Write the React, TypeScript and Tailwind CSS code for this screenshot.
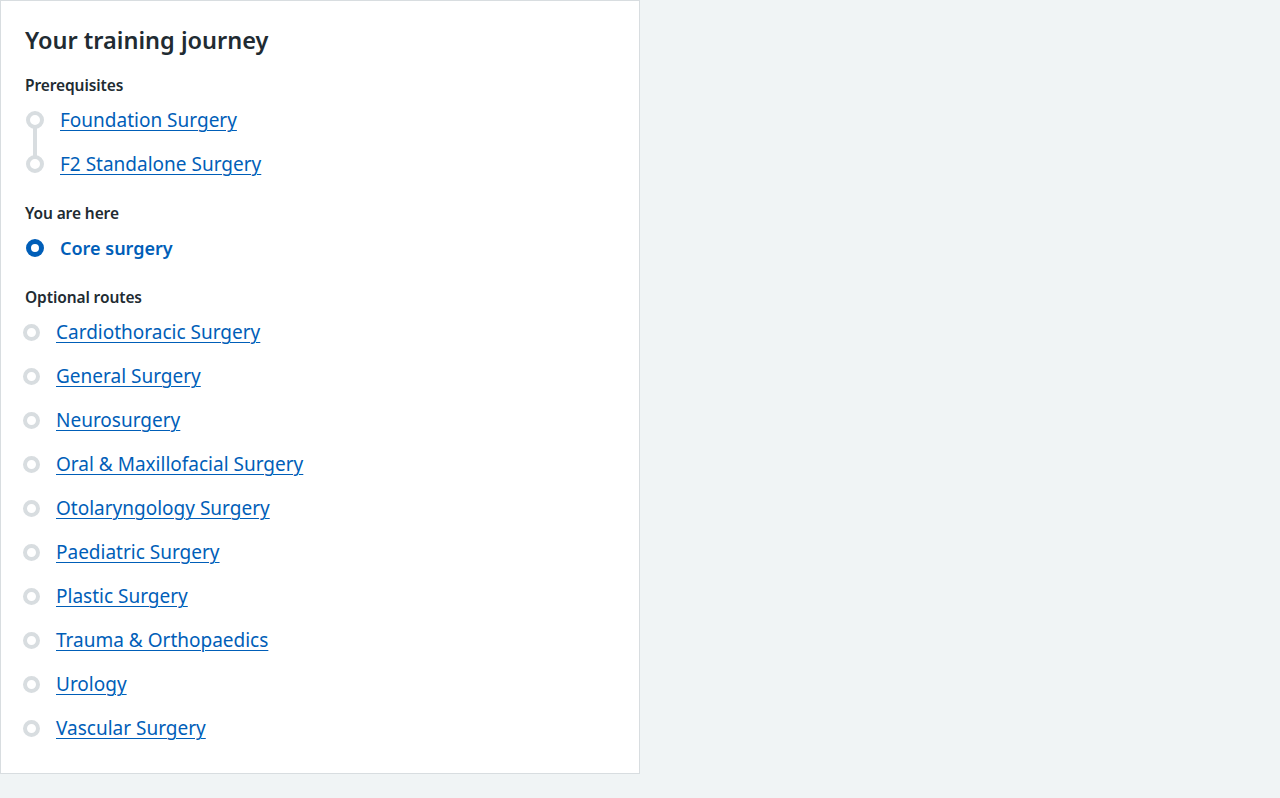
import React from "react";

const prerequisites = ["Foundation Surgery", "F2 Standalone Surgery"];

const optionalRoutes = [
  "Cardiothoracic Surgery",
  "General Surgery",
  "Neurosurgery",
  "Oral & Maxillofacial Surgery",
  "Otolaryngology Surgery",
  "Paediatric Surgery",
  "Plastic Surgery",
  "Trauma & Orthopaedics",
  "Urology",
  "Vascular Surgery",
];

function Ring({ color, size = 18, stroke = 4 }: { color: string; size?: number; stroke?: number }) {
  const r = (size - stroke) / 2;
  return (
    <svg width={size} height={size} viewBox={`0 0 ${size} ${size}`} className="shrink-0">
      <circle cx={size / 2} cy={size / 2} r={r} fill="white" stroke={color} strokeWidth={stroke} />
    </svg>
  );
}

function StepLink({ label }: { label: string }) {
  return (
    <a
      href="#"
      className="text-[19px] leading-6 text-[#005eb8] underline decoration-1 underline-offset-[3px]"
    >
      {label}
    </a>
  );
}

export default function App() {
  return (
    <div
      className="min-h-[798px] bg-[#f0f4f5] text-[#212b32]"
      style={{ fontFamily: '"Noto Sans", "Open Sans", Arial, sans-serif' }}
    >
      <section className="w-[640px] border border-[#d8dde0] bg-white px-6 pt-[23px] pb-[23px]">
        <h2 className="text-[23.5px] font-semibold leading-8">Your training journey</h2>

        {/* Prerequisites */}
        <h3 className="mt-[17px] text-[15.5px] font-semibold leading-6 tracking-[-0.1px]">Prerequisites</h3>
        <ul className="relative ml-px mt-px">
          <span className="absolute left-[7px] top-[30px] h-[28px] w-1 bg-[#d8dde0]" />
          {prerequisites.map((p) => (
            <li key={p} className="relative flex h-11 items-center gap-4">
              <Ring color="#d8dde0" />
              <StepLink label={p} />
            </li>
          ))}
        </ul>

        {/* Current */}
        <h3 className="mt-[15px] text-[15.5px] font-semibold leading-6 tracking-[-0.1px]">You are here</h3>
        <div className="ml-px mt-px flex h-11 items-center gap-4">
          <Ring color="#005eb8" size={18} stroke={5} />
          <span className="text-[18px] font-semibold leading-6 text-[#005eb8]">Core surgery</span>
        </div>

        {/* Optional routes */}
        <h3 className="mt-[15px] text-[15.5px] font-semibold leading-6 tracking-[-0.1px]">Optional routes</h3>
        <ul className="-ml-[2px] mt-px">
          {optionalRoutes.map((r) => (
            <li key={r} className="flex h-11 items-center gap-4">
              <Ring color="#d8dde0" size={17} />
              <StepLink label={r} />
            </li>
          ))}
        </ul>
      </section>
    </div>
  );
}
